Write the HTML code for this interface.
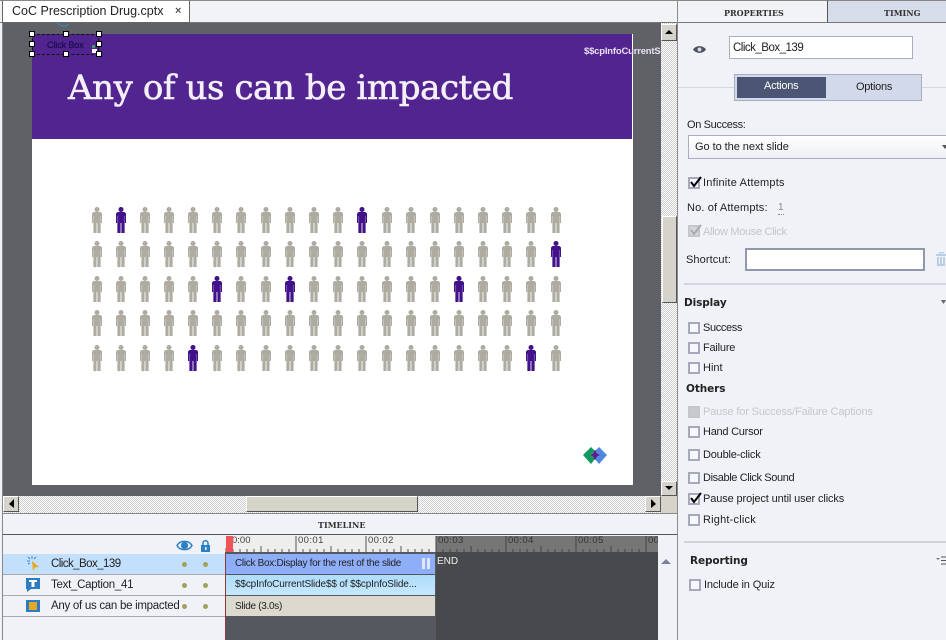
<!DOCTYPE html>
<html><head><meta charset="utf-8">
<style>
html,body{margin:0;padding:0}
body{width:946px;height:640px;position:relative;overflow:hidden;background:#f0f2f7;font-family:"Liberation Sans",sans-serif;font-size:11px;color:#222}
div,span{position:absolute;box-sizing:border-box}
.t{white-space:nowrap;line-height:14px}
.d{background:repeating-conic-gradient(#cfcfcf 0 25%,#fff 0 50%) 0 0/2px 2px}
.btn{background:#d6d3cb;border:1px solid;border-color:#fff #555 #555 #fff}
.cb{width:12px;height:12px;border:2px solid #a4a9bb;background:#f6f7fa;left:688px}
.h{width:6px;height:6px;background:#fff;border:1px solid #000}
.b{font-weight:bold;font-family:"DejaVu Sans",sans-serif;font-size:10.5px;letter-spacing:-.1px}
.dot{width:5px;height:5px;border-radius:50%;background:#a3a05c}
.l{left:51px;font-size:11.5px}
.sep{background:#a9a9ad;height:1px}
svg{position:absolute;display:block}
</style></head><body>
<!-- tab bar -->
<div style="left:0;top:0;width:677px;height:23px;background:#f2f3f7;border-top:1px solid #8a8a8a;border-bottom:1px solid #777"></div>
<div style="left:2px;top:0;width:188px;height:23px;background:#fff;border:1px solid #666;border-top:1px solid #888"></div>
<div class="t" style="left:12px;top:4px;font-size:12.5px;color:#222;width:153px;overflow:hidden">CoC Prescription Drug.cptx</div>
<div class="t" style="left:175px;top:4px;font-size:11px;font-weight:bold;color:#555">×</div>
<!-- stage -->
<div style="left:0;top:23px;width:3px;height:617px;background:#f0f2f7;border-right:1px solid #888"></div>
<div style="left:3px;top:23px;width:658px;height:473px;background:#5f6166"></div>
<div style="left:32px;top:34px;width:601px;height:451px;background:#fff"></div>
<div style="left:32px;top:34px;width:600px;height:105px;background:#52248f"></div>
<div class="t" style="left:68px;top:67px;font-family:'DejaVu Serif',serif;font-size:34px;line-height:42px;color:#f4f0f8;letter-spacing:-.4px;-webkit-text-stroke:.6px #f4f0f8">Any of us can be impacted</div>
<div class="t" style="left:584px;top:45px;width:77px;overflow:hidden;font-size:9.5px;font-weight:bold;color:#e8e0f4;letter-spacing:-.2px">$$cpInfoCurrentSlide</div>
<!-- click box -->
<svg width="16" height="6" style="left:56px;top:22px"><path d="M1 0C4 5 10 5 13 2" fill="none" stroke="#3a8ad0"/></svg>
<div style="left:32px;top:34px;width:67px;height:21px;background:#52248f;border:1px dashed #111"></div>
<div class="t" style="left:47px;top:38px;font-size:9px;color:#1a0a50;-webkit-text-stroke:.2px #1a0a50;letter-spacing:-.1px">Click Box</div>
<div style="left:92px;top:45px;width:3px;height:3px;background:#3f9a5c"></div>
<div style="left:92px;top:49px;width:5px;height:4px;background:#fff"></div>
<div class="h" style="left:29px;top:31px"></div><div class="h" style="left:63px;top:31px"></div><div class="h" style="left:96px;top:31px"></div>
<div class="h" style="left:29px;top:41px"></div><div class="h" style="left:96px;top:41px"></div>
<div class="h" style="left:29px;top:51px"></div><div class="h" style="left:63px;top:51px"></div><div class="h" style="left:96px;top:51px"></div>
<!-- people -->
<svg width="946" height="640" style="left:0;top:0" viewBox="0 0 946 640">
<defs>
<g id="p"><circle cx="0" cy="2.500" r="2.500"/><path d="M-3.500 5H3.500L5 6.500V16H3.600V26H.4V16H-.4V26H-3.600V16H-5V6.500Z"/><path d="M-3.300 9V16M3.300 9V16M0 16V26" stroke="#fff" stroke-opacity=".4" stroke-width=".7" fill="none"/></g>
<g id="r">
<use href="#p" x="97"/><use href="#p" x="121"/><use href="#p" x="145"/><use href="#p" x="169"/><use href="#p" x="193"/><use href="#p" x="217"/><use href="#p" x="241"/><use href="#p" x="266"/><use href="#p" x="290"/><use href="#p" x="314"/><use href="#p" x="338"/><use href="#p" x="362"/><use href="#p" x="387"/><use href="#p" x="411"/><use href="#p" x="435"/><use href="#p" x="459"/><use href="#p" x="483"/><use href="#p" x="507"/><use href="#p" x="531"/><use href="#p" x="556"/>
</g>
</defs>
<g fill="#aeaba1"><use href="#r" y="207"/><use href="#r" y="241"/><use href="#r" y="276"/><use href="#r" y="310"/><use href="#r" y="345"/></g>
<g fill="#42128a"><use href="#p" x="121" y="207"/><use href="#p" x="362" y="207"/><use href="#p" x="556" y="241"/><use href="#p" x="217" y="276"/><use href="#p" x="290" y="276"/><use href="#p" x="459" y="276"/><use href="#p" x="193" y="345"/><use href="#p" x="531" y="345"/></g>
<!-- logo -->
<path d="M583 455 591 447 595 451 590 455 595 459 591 464Z" fill="#0f9a5c"/>
<path d="M607 455 599 447 595 451 600 455 595 459 599 464Z" fill="#4f86e0"/>
<path d="M595 450 597 453 600 455 597 457 595 460 593 457 590 455 593 453Z" fill="#52248f"/>
</svg>
<!-- scrollbars -->
<div class="d" style="left:661px;top:23px;width:16px;height:473px"></div>
<div class="btn" style="left:661px;top:24px;width:16px;height:17px"></div>
<svg width="16" height="17" style="left:661px;top:24px"><path d="M4 10H12L8 6Z" fill="#000"/></svg>
<div class="btn" style="left:662px;top:216px;width:15px;height:87px"></div>
<div class="btn" style="left:661px;top:481px;width:16px;height:15px"></div>
<svg width="16" height="15" style="left:661px;top:481px"><path d="M4 5H12L8 9Z" fill="#000"/></svg>
<div class="d" style="left:3px;top:496px;width:658px;height:17px"></div>
<div class="btn" style="left:3px;top:496px;width:16px;height:16px"></div>
<svg width="16" height="16" style="left:3px;top:496px"><path d="M11 3V12L6 8Z" fill="#000"/></svg>
<div class="btn" style="left:246px;top:496px;width:172px;height:16px"></div>
<div class="btn" style="left:645px;top:496px;width:16px;height:16px"></div>
<svg width="16" height="16" style="left:645px;top:496px"><path d="M6 3V12L11 8Z" fill="#000"/></svg>
<div style="left:661px;top:496px;width:16px;height:17px;background:#d6d3cb"></div>
<!-- timeline header -->
<div style="left:3px;top:513px;width:674px;height:22px;background:#f0f2f7;border-top:1px solid #888;border-bottom:1px solid #555"></div>
<div class="t" style="left:318px;top:518px;font-family:'DejaVu Serif',serif;font-weight:bold;font-size:8px;color:#333">TIMELINE</div>
<!-- layer list -->
<div style="left:3px;top:554px;width:222px;height:20px;background:#c2e0fb"></div>
<div class="sep" style="left:3px;top:574px;width:222px"></div>
<div class="sep" style="left:3px;top:595px;width:222px"></div>
<div class="sep" style="left:3px;top:616px;width:222px"></div>
<svg width="20" height="14" style="left:176px;top:539px"><path d="M1 6.500C4 1 13 1 16 6.500C13 12 4 12 1 6.500Z" fill="none" stroke="#2a80c6" stroke-width="1.500"/><circle cx="8.500" cy="6.500" r="3.600" fill="#2a80c6"/></svg>
<svg width="14" height="14" style="left:199px;top:539px"><path d="M4 6V4C4 1 9 1 9 4V6" fill="none" stroke="#2a80c6" stroke-width="1.500"/><rect x="2" y="6" width="9" height="7" fill="#2a80c6"/><rect x="6" y="8" width="1.500" height="3" fill="#fff"/></svg>
<svg width="20" height="20" style="left:24px;top:555px"><path d="M8 6 15 12 11 12.500 9 16Z" fill="#e8a820"/><path d="M8 1V4M3 6H6M4 2 6 4M12 2 10 4M4 9 6 8" stroke="#3a8ad0" stroke-width="1" fill="none"/></svg>
<svg width="16" height="16" style="left:26px;top:577px"><path d="M0 1H14V12H5L1 15V12H0Z" fill="#2b7cc0"/><path d="M3 3H11V5H8.500V10H5.500V5H3Z" fill="#fff"/></svg>
<div style="left:26px;top:600px;width:14px;height:12px;background:#2b7cc0"></div>
<div style="left:29px;top:602px;width:8px;height:8px;background:#e5a823"></div>
<div class="t l" style="top:557px;letter-spacing:-.55px">Click_Box_139</div>
<div class="t l" style="top:578px;letter-spacing:-.27px">Text_Caption_41</div>
<div class="t l" style="top:599px;letter-spacing:-.28px">Any of us can be impacted</div>
<div class="dot" style="left:182px;top:562px"></div><div class="dot" style="left:203px;top:562px"></div>
<div class="dot" style="left:182px;top:583px"></div><div class="dot" style="left:203px;top:583px"></div>
<div class="dot" style="left:182px;top:604px"></div><div class="dot" style="left:203px;top:604px"></div>
<!-- ruler -->
<div style="left:225px;top:536px;width:211px;height:16px;background:#eeeeec"></div>
<div style="left:436px;top:536px;width:222px;height:16px;background:#767676"></div>
<div style="left:226px;top:552px;width:210px;height:88px;background:#565860"></div>
<div style="left:436px;top:552px;width:222px;height:88px;background:#48494d"></div>
<svg width="434" height="17" style="left:225px;top:536px">
<path d="M1 16V12M8 16V13M15 16V13M22 16V13M29 16V13M36 16V10M43 16V13M50 16V13M57 16V13M64 16V13M71 0V16M78 16V13M85 16V13M92 16V13M99 16V13M106 16V10M113 16V13M120 16V13M127 16V13M134 16V13M141 0V16M148 16V13M155 16V13M162 16V13M169 16V13M176 16V10M183 16V13M190 16V13M197 16V13M204 16V13" stroke="#555" fill="none"/>
<path d="M211 0V16M218 16V13M225 16V13M232 16V13M239 16V13M246 16V10M253 16V13M260 16V13M267 16V13M274 16V13M281 0V16M288 16V13M295 16V13M302 16V13M309 16V13M316 16V10M323 16V13M330 16V13M337 16V13M344 16V13M351 0V16M358 16V13M365 16V13M372 16V13M379 16V13M386 16V10M393 16V13M400 16V13M407 16V13M414 16V13M421 0V16" stroke="#444" fill="none"/>
</svg>
<div class="t" style="left:232px;top:534px;font-size:9.5px;color:#444">0:00</div>
<div class="t" style="left:298px;top:534px;font-size:9.5px;color:#444;letter-spacing:.4px">00:01</div>
<div class="t" style="left:368px;top:534px;font-size:9.5px;color:#444;letter-spacing:.4px">00:02</div>
<div class="t" style="left:438px;top:534px;font-size:9.5px;color:#333;letter-spacing:.4px">00:03</div>
<div class="t" style="left:508px;top:534px;font-size:9.5px;color:#333;letter-spacing:.4px">00:04</div>
<div class="t" style="left:578px;top:534px;font-size:9.5px;color:#333;letter-spacing:.4px">00:05</div>
<div class="t" style="left:648px;top:534px;width:10px;overflow:hidden;font-size:9.5px;color:#333;letter-spacing:.4px">00</div>
<div class="t" style="left:437px;top:555px;font-size:10px;color:#eee">END</div>
<!-- clips -->
<div style="left:226px;top:554px;width:209px;height:20px;background:#8eaefa"></div>
<div style="left:226px;top:575px;width:209px;height:20px;background:linear-gradient(#aedcfb,#c4e8fd)"></div>
<div style="left:226px;top:596px;width:209px;height:20px;background:#dcd9cf"></div>
<div class="t" style="left:235px;top:557px;font-size:10px;color:#222;letter-spacing:-.3px">Click Box:Display for the rest of the slide</div>
<div class="t" style="left:235px;top:578px;font-size:10px;color:#222;letter-spacing:-.15px">$$cpInfoCurrentSlide$$ of $$cpInfoSlide...</div>
<div class="t" style="left:235px;top:600px;font-size:10px;color:#222;letter-spacing:-.3px">Slide (3.0s)</div>
<div style="left:422px;top:558px;width:3px;height:11px;background:#dde6fc"></div>
<div style="left:427px;top:558px;width:3px;height:11px;background:#dde6fc"></div>
<div style="left:225px;top:552px;width:1px;height:88px;background:#8b3a3a"></div>
<div style="left:226px;top:536px;width:7px;height:16px;background:#f05555"></div>
<svg width="12" height="8" style="left:660px;top:557px"><path d="M1 7H11L6 2Z" fill="#7d8499"/></svg>
<!-- right panel -->
<div style="left:677px;top:0;width:269px;height:640px;background:#f0f2f7;border-left:1px solid #8a8a8a"></div>
<div style="left:678px;top:0;width:150px;height:23px;background:#f2f3f7;border-top:1px solid #888;border-bottom:1px solid #777;border-right:1px solid #555"></div>
<div style="left:828px;top:0;width:118px;height:23px;background:#d6dce9;border-top:1px solid #888;border-bottom:1px solid #777"></div>
<div class="t" style="left:724px;top:6px;font-family:'DejaVu Serif',serif;font-weight:bold;font-size:8px;color:#333">PROPERTIES</div>
<div class="t" style="left:884px;top:6px;font-family:'DejaVu Serif',serif;font-weight:bold;font-size:8px;color:#333">TIMING</div>
<svg width="16" height="12" style="left:692px;top:44px"><path d="M1 5.500C4 1 11 1 14 5.500C11 10 4 10 1 5.500Z" fill="#4a5060"/><circle cx="7.500" cy="5.500" r="2" fill="#d8dce4"/></svg>
<div style="left:729px;top:36px;width:184px;height:23px;background:#fff;border:1px solid #a8aebf"></div>
<div class="t" style="left:733px;top:41px;font-size:11.5px;letter-spacing:-.5px">Click_Box_139</div>
<div style="left:678px;top:87px;width:268px;height:1px;background:#d8dae0"></div>
<div style="left:734px;top:74px;width:188px;height:27px;background:#d2d9ea;border:1px solid #a5adc2"></div>
<div style="left:737px;top:77px;width:89px;height:21px;background:#4b5674"></div>
<div class="t" style="left:764px;top:79px;font-size:11px;color:#fff;letter-spacing:-.25px">Actions</div>
<div class="t" style="left:856px;top:80px;font-size:11px;color:#222;letter-spacing:-.25px">Options</div>
<div class="t" style="left:687px;top:118px;font-size:11px;letter-spacing:-.35px">On Success:</div>
<div style="left:688px;top:135px;width:270px;height:24px;background:linear-gradient(#fff,#eef0f5);border:1px solid #a8aebf"></div>
<div class="t" style="left:695px;top:140px;font-size:11px;letter-spacing:-.05px">Go to the next slide</div>
<svg width="6" height="6" style="left:942px;top:144px"><path d="M0 1H6L3 5Z" fill="#555"/></svg>
<div class="cb" style="top:177px"></div>
<svg width="14" height="14" style="left:689px;top:175px"><path d="M2 7 5 11 12 2" fill="none" stroke="#000" stroke-width="2"/></svg>
<div class="t" style="left:703px;top:176px;font-size:11px;letter-spacing:.2px">Infinite Attempts</div>
<div class="t" style="left:687px;top:201px;font-size:11px;letter-spacing:.15px">No. of Attempts:</div>
<div class="t" style="left:778px;top:202px;font-size:10px;color:#888;border-bottom:1px dotted #888;line-height:12px">1</div>
<div class="cb" style="top:225px;border-color:#c4c6cc;background:#d4d6db"></div>
<svg width="14" height="14" style="left:689px;top:223px"><path d="M2 7 5 11 12 2" fill="none" stroke="#aaa" stroke-width="2"/></svg>
<div class="t" style="left:703px;top:225px;font-size:11px;color:#c4c6cc;letter-spacing:-.33px">Allow Mouse Click</div>
<div class="t" style="left:686px;top:253px;font-size:11px;letter-spacing:.1px">Shortcut:</div>
<div style="left:745px;top:248px;width:180px;height:23px;background:#fff;border:2px solid #8f98ac"></div>
<svg width="10" height="14" style="left:936px;top:252px"><path d="M3 0H8V1.500H3ZM0 2H10V4H0ZM1 5H3V14H1ZM4 5H6V14H4ZM7 5H9V14H7ZM1 12H9V14H1Z" fill="#b8d0e6"/></svg>
<div style="left:684px;top:283px;width:262px;height:2px;background:#d4d6df"></div>
<div class="t b" style="left:684px;top:296px">Display</div>
<svg width="5" height="4" style="left:941px;top:300px"><path d="M0 0H5L2.500 4Z" fill="#666"/></svg>
<div class="cb" style="top:322px"></div><div class="t" style="left:703px;top:321px;letter-spacing:-.37px">Success</div>
<div class="cb" style="top:342px"></div><div class="t" style="left:703px;top:341px;letter-spacing:-.2px">Failure</div>
<div class="cb" style="top:362px"></div><div class="t" style="left:703px;top:361px">Hint</div>
<div class="t b" style="left:686px;top:382px">Others</div>
<div class="cb" style="top:406px;border-color:#c4c6cc;background:#c8cad0"></div>
<div class="t" style="left:703px;top:405px;color:#c4c6cc;letter-spacing:-.15px">Pause for Success/Failure Captions</div>
<div class="cb" style="top:426px"></div><div class="t" style="left:703px;top:425px;letter-spacing:-.25px">Hand Cursor</div>
<div class="cb" style="top:449px"></div><div class="t" style="left:703px;top:448px;letter-spacing:-.2px">Double-click</div>
<div class="cb" style="top:472px"></div><div class="t" style="left:703px;top:471px;letter-spacing:-.38px">Disable Click Sound</div>
<div class="cb" style="top:493px"></div>
<svg width="14" height="14" style="left:689px;top:491px"><path d="M2 7 5 11 12 2" fill="none" stroke="#000" stroke-width="2"/></svg>
<div class="t" style="left:703px;top:492px;letter-spacing:-.12px">Pause project until user clicks</div>
<div class="cb" style="top:514px"></div><div class="t" style="left:703px;top:513px;letter-spacing:.2px">Right-click</div>
<div style="left:684px;top:541px;width:262px;height:2px;background:#d0d2d8"></div>
<div class="t b" style="left:690px;top:554px">Reporting</div>
<svg width="12" height="10" style="left:935px;top:556px"><path d="M1 2H5L3 4Z" fill="#777"/><path d="M6 1H12M6 4.500H12M6 8H12" stroke="#555"/></svg>
<div class="cb" style="top:579px;left:689px"></div><div class="t" style="left:704px;top:578px;letter-spacing:-.13px">Include in Quiz</div>
</body></html>
